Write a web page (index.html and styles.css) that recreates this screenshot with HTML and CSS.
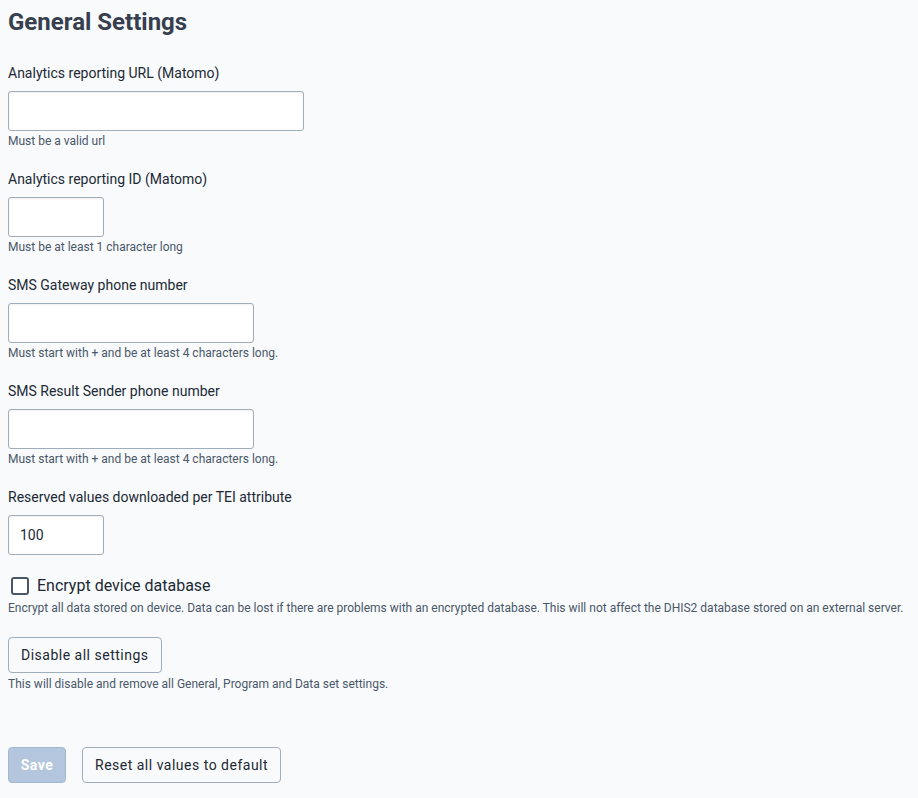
FILE: index.html
```html
<!DOCTYPE html>
<html>
<head>
<meta charset="utf-8">
<link rel="stylesheet" href="styles.css">
</head>
<body>
<div class="page">
  <h1 class="title">General Settings</h1>
  <form class="form">
    <div class="field">
      <label class="label">Analytics reporting URL (Matomo)</label>
      <input class="input w-url" type="text">
      <div class="help">Must be a valid url</div>
    </div>
    <div class="field">
      <label class="label">Analytics reporting ID (Matomo)</label>
      <input class="input w-id" type="text">
      <div class="help">Must be at least 1 character long</div>
    </div>
    <div class="field">
      <label class="label">SMS Gateway phone number</label>
      <input class="input w-phone" type="text">
      <div class="help">Must start with + and be at least 4 characters long.</div>
    </div>
    <div class="field">
      <label class="label">SMS Result Sender phone number</label>
      <input class="input w-phone" type="text">
      <div class="help">Must start with + and be at least 4 characters long.</div>
    </div>
    <div class="field last">
      <label class="label">Reserved values downloaded per TEI attribute</label>
      <input class="input w-id" type="text" value="100">
    </div>
    <div class="check-row">
      <span class="checkbox"></span>
      <span class="check-label">Encrypt device database</span>
    </div>
    <div class="help check-help">Encrypt all data stored on device. Data can be lost if there are problems with an encrypted database. This will not affect the DHIS2 database stored on an external server.</div>
    <button type="button" class="btn disable-btn">Disable all settings</button>
    <div class="help">This will disable and remove all General, Program and Data set settings.</div>
    <div class="actions">
      <button type="button" class="btn save">Save</button>
      <button type="button" class="btn">Reset all values to default</button>
    </div>
  </form>
</div>
</body>
</html>
```
FILE: styles.css
```css
html, body {
  margin: 0;
  padding: 0;
  background: #f8fafc;
}
body {
  font-family: Roboto, "Liberation Sans", sans-serif;
  color: #212934;
}
.page {
  padding: 8px;
}
.title {
  margin: 0;
  font-size: 24px;
  line-height: 28px;
  font-weight: 700;
  color: #373e4e;
}
.form {
  margin-top: 28px;
  display: flex;
  flex-direction: column;
  align-items: flex-start;
}
.field {
  display: flex;
  flex-direction: column;
  align-items: flex-start;
  margin-bottom: 22px;
}
.field.last {
  margin-bottom: 21px;
}
.label {
  font-size: 14px;
  line-height: 18px;
  margin-bottom: 9px;
  color: #212934;
}
.input {
  box-sizing: border-box;
  height: 40px;
  border: 1px solid #a0adba;
  border-radius: 3px;
  background: #fff;
  padding: 0 11px;
  font-family: inherit;
  font-size: 14px;
  color: #212934;
  box-shadow: inset 0 1px 2px rgba(48,54,60,0.08);
  margin: 0;
}
.w-url { width: 296px; }
.w-id { width: 96px; }
.w-phone { width: 246px; }
.help {
  font-size: 12px;
  line-height: 14px;
  margin-top: 3px;
  color: #4a5768;
}
.check-row {
  display: flex;
  align-items: center;
  height: 20px;
}
.checkbox {
  box-sizing: border-box;
  width: 18px;
  height: 18px;
  border: 2px solid #4a5768;
  border-radius: 3px;
  background: #fff;
  margin-left: 3px;
  margin-right: 8px;
}
.check-label {
  font-size: 16px;
  line-height: 20px;
  color: #212934;
}
.check-help {
  margin-top: 5px;
  margin-bottom: 22px;
}
.btn {
  box-sizing: border-box;
  height: 36px;
  padding: 0 12px;
  border: 1px solid #a0adba;
  border-radius: 4px;
  background: #f9fafb;
  font-family: inherit;
  font-size: 14px;
  color: #212934;
  letter-spacing: 0.5px;
  cursor: pointer;
}
.disable-btn {
  margin-bottom: 1px;
}
.actions {
  margin-top: 56px;
  display: flex;
  gap: 16px;
}
.save {
  width: 58px;
  padding: 0;
  background: #b3c6de;
  border-color: #a3b7d0;
  color: #fff;
  font-weight: 700;
}
```
